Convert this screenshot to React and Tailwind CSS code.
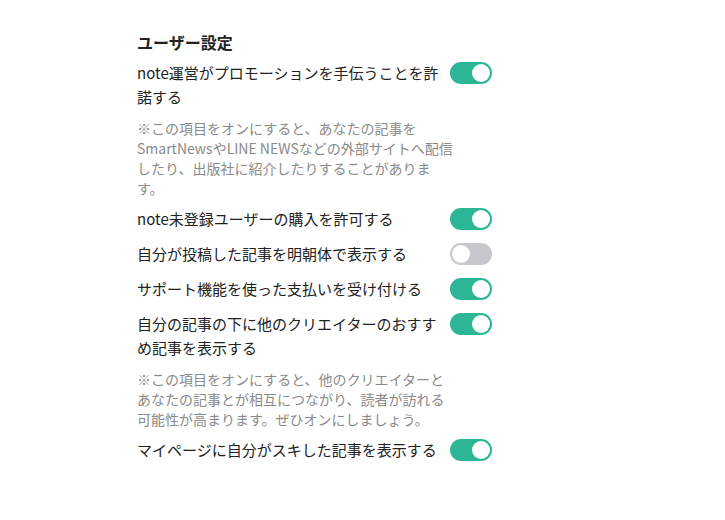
const settings = [
  {
    label: "note運営がプロモーションを手伝うことを許諾する",
    on: true,
    note: [
      "※この項目をオンにすると、あなたの記事を",
      "SmartNewsやLINE NEWSなどの外部サイトへ配信",
      "したり、出版社に紹介したりすることがありま",
      "す。",
    ],
  },
  { label: "note未登録ユーザーの購入を許可する", on: true },
  { label: "自分が投稿した記事を明朝体で表示する", on: false },
  { label: "サポート機能を使った支払いを受け付ける", on: true },
  {
    label: "自分の記事の下に他のクリエイターのおすすめ記事を表示する",
    on: true,
    note: [
      "※この項目をオンにすると、他のクリエイターと",
      "あなたの記事とが相互につながり、読者が訪れる",
      "可能性が高まります。ぜひオンにしましょう。",
    ],
  },
  { label: "マイページに自分がスキした記事を表示する", on: true },
];

function Toggle({ on }) {
  return (
    <div
      className={`mt-[1px] flex h-[22px] w-[42px] shrink-0 items-center rounded-full px-[2px] ${
        on ? "justify-end bg-[#2cb696]" : "justify-start bg-[#c6c8cb]"
      }`}
    >
      <div className="h-[18px] w-[18px] rounded-full bg-white" />
    </div>
  );
}

export default function App() {
  return (
    <div
      className="min-h-[520px] bg-white text-[#222222]"
      style={{ fontFamily: '"Noto Sans CJK JP", "Noto Sans", sans-serif' }}
    >
      <div className="ml-[137px] w-[355px] pt-[30px]">
        <h2 className="text-[16px] font-bold leading-[24px]">ユーザー設定</h2>
        <div className="mt-[7px] flex flex-col gap-[11px]">
          {settings.map((s) => (
            <div key={s.label}>
              <div className="flex items-start justify-between">
                <p className="w-[306px] text-[15px] leading-[24px]">{s.label}</p>
                <Toggle on={s.on} />
              </div>
              {s.note && (
                <p className="mb-[-2px] mt-[9px] w-[320px] text-[14px] leading-[20px] text-[#8a8a8a]">
                  {s.note.map((line) => (
                    <span key={line} className="block whitespace-nowrap">
                      {line}
                    </span>
                  ))}
                </p>
              )}
            </div>
          ))}
        </div>
      </div>
    </div>
  );
}
